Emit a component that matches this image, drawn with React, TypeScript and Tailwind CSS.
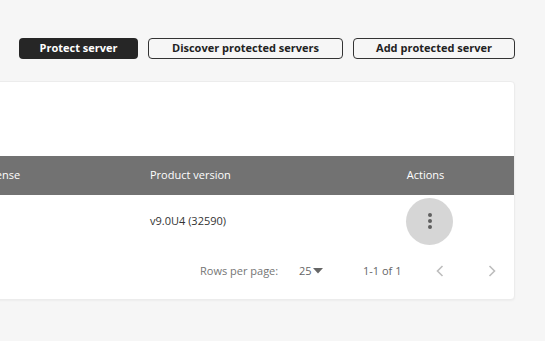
import React from 'react';

const font = { fontFamily: '"Open Sans", Lato, Arial, sans-serif' };

const App: React.FC = () => {
  return (
    <div
      className="w-[545px] h-[341px] overflow-hidden bg-[#f6f6f6] text-[#333]"
      style={font}
    >
      {/* toolbar */}
      <div className="flex justify-end gap-[10px] pr-[30px] pt-[38px]">
        <button className="w-[119px] h-[21px] rounded-[4px] bg-[#262626] text-white text-[11px] font-bold">
          Protect server
        </button>
        <button className="w-[195px] h-[21px] rounded-[4px] border border-[#333] text-[#222] text-[11px] font-bold">
          Discover protected servers
        </button>
        <button className="w-[162px] h-[21px] rounded-[4px] border border-[#333] text-[#222] text-[11px] font-bold">
          Add protected server
        </button>
      </div>

      {/* table card */}
      <div className="flex justify-end pr-[30px] mt-[22px]">
        <div className="w-[800px] shrink-0 h-[219px] bg-white rounded-[4px] border border-[#ececec] shadow-[0_1px_2px_rgba(0,0,0,0.04)] flex flex-col">
          <div className="h-[74px]" />
          <div className="flex items-center h-[39px] bg-[#727272] text-white text-[11px]">
            <div className="w-[266px] shrink-0 pl-4">Server name</div>
            <div className="w-[168px] shrink-0">License</div>
            <div className="w-[235px] shrink-0">Product version</div>
            <div className="w-[81px] shrink-0 text-center">Actions</div>
          </div>
          <div className="flex items-center h-[52px] text-[11px]">
            <div className="w-[266px] shrink-0 pl-4" />
            <div className="w-[168px] shrink-0" />
            <div className="w-[235px] shrink-0">v9.0U4 (32590)</div>
            <div className="w-[81px] shrink-0 flex justify-center pl-2">
              <div className="w-[47px] h-[47px] rounded-full bg-[#d6d6d6] flex flex-col items-center justify-center gap-[2px]">
                <span className="w-[4px] h-[4px] rounded-full bg-[#5f5f5f]" />
                <span className="w-[4px] h-[4px] rounded-full bg-[#5f5f5f]" />
                <span className="w-[4px] h-[4px] rounded-full bg-[#5f5f5f]" />
              </div>
            </div>
          </div>
          <div className="flex items-center h-[48px] text-[11px] text-[#757575]">
            <div className="w-[484px] shrink-0" />
            <span className="w-[99px] shrink-0">Rows per page:</span>
            <span className="flex items-center w-[64px] shrink-0 text-[#666]">
              25
              <svg width="10" height="6" viewBox="0 0 10 6" className="ml-[1px]">
                <path d="M0 0 L10 0 L5 5.5 Z" fill="#666" />
              </svg>
            </span>
            <span className="w-[73px] shrink-0 text-[#666]">1-1 of 1</span>
            <svg width="8" height="12" viewBox="0 0 8 12" className="shrink-0">
              <path d="M6.5 1 L1.5 6 L6.5 11" fill="none" stroke="#bdbdbd" strokeWidth="1.6" />
            </svg>
            <div className="w-[44px] shrink-0" />
            <svg width="8" height="12" viewBox="0 0 8 12" className="shrink-0">
              <path d="M1.5 1 L6.5 6 L1.5 11" fill="none" stroke="#bdbdbd" strokeWidth="1.6" />
            </svg>
          </div>
        </div>
      </div>
    </div>
  );
};

export default App;
